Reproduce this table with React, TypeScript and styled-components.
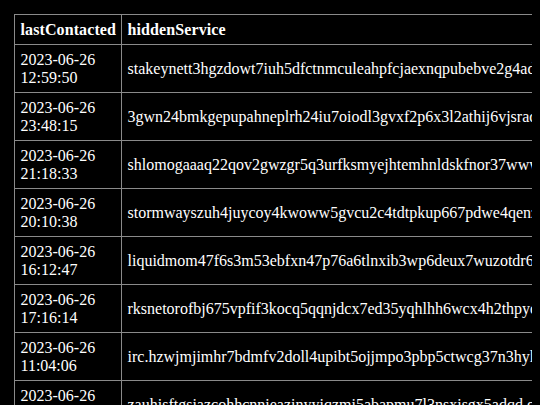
import React from 'react'
import styled, { createGlobalStyle } from 'styled-components'

const GlobalStyle = createGlobalStyle`
  body {
    margin: 8px;
    background: #000;
    color: #fff;
    font-family: "Liberation Serif", "Times New Roman", serif;
    font-size: 16px;
  }
`

const Page = styled.div`
  padding: 6px;
`

const Table = styled.table`
  border-collapse: collapse;
  border: 1px solid #8a8a8a;
  line-height: 18px;
`

const HeadCell = styled.th`
  border: 1px solid #8a8a8a;
  padding: 5.5px 5px 5.5px 5.5px;
  text-align: left;
  font-weight: bold;
  white-space: nowrap;
  letter-spacing: 0.1px;
`

const Cell = styled.td<{ $mono?: boolean }>`
  border: 1px solid #8a8a8a;
  padding: 5.5px 5px 5.5px 5.5px;
  text-align: left;
  vertical-align: middle;
  white-space: ${({ $mono }) => ($mono ? 'nowrap' : 'normal')};
`

interface Peer {
  lastContacted: string
  hiddenService: string
}

const peers: Peer[] = [
  { lastContacted: '2023-06-26 12:59:50', hiddenService: 'stakeynett3hgzdowt7iuh5dfctnmculeahpfcjaexnqpubebve2g4adid.onion' },
  { lastContacted: '2023-06-26 23:48:15', hiddenService: '3gwn24bmkgepupahneplrh24iu7oiodl3gvxf2p6x3l2athij6vjsradyd.onion' },
  { lastContacted: '2023-06-26 21:18:33', hiddenService: 'shlomogaaaq22qov2gwzgr5q3urfksmyejhtemhnldskfnor37wwwxqd.onion' },
  { lastContacted: '2023-06-26 20:10:38', hiddenService: 'stormwayszuh4juycoy4kwoww5gvcu2c4tdtpkup667pdwe4qenzwayd.onion' },
  { lastContacted: '2023-06-26 16:12:47', hiddenService: 'liquidmom47f6s3m53ebfxn47p76a6tlnxib3wp6deux7wuzotdr6cyd.onion' },
  { lastContacted: '2023-06-26 17:16:14', hiddenService: 'rksnetorofbj675vpfif3kocq5qqnjdcx7ed35yqhlhh6wcx4h2thpydyd.onion' },
  { lastContacted: '2023-06-26 11:04:06', hiddenService: 'irc.hzwjmjimhr7bdmfv2doll4upibt5ojjmpo3pbp5ctwcg37n3hyk7qd.onion' },
  { lastContacted: '2023-06-26 09:31:22', hiddenService: 'zauhisftgsiazcohhcnnieazinyyiqzmi5abapmu7l3nsxisgx5adqd.onion' },
]

export default function App() {
  return (
    <>
      <GlobalStyle />
      <Page>
        <Table>
          <thead>
            <tr>
              <HeadCell>lastContacted</HeadCell>
              <HeadCell>hiddenService</HeadCell>
            </tr>
          </thead>
          <tbody>
            {peers.map((p) => {
              const [date, time] = p.lastContacted.split(' ')
              return (
                <tr key={p.hiddenService}>
                  <Cell>
                    {date}
                    <br />
                    {time}
                  </Cell>
                  <Cell $mono>{p.hiddenService}</Cell>
                </tr>
              )
            })}
          </tbody>
        </Table>
      </Page>
    </>
  )
}
